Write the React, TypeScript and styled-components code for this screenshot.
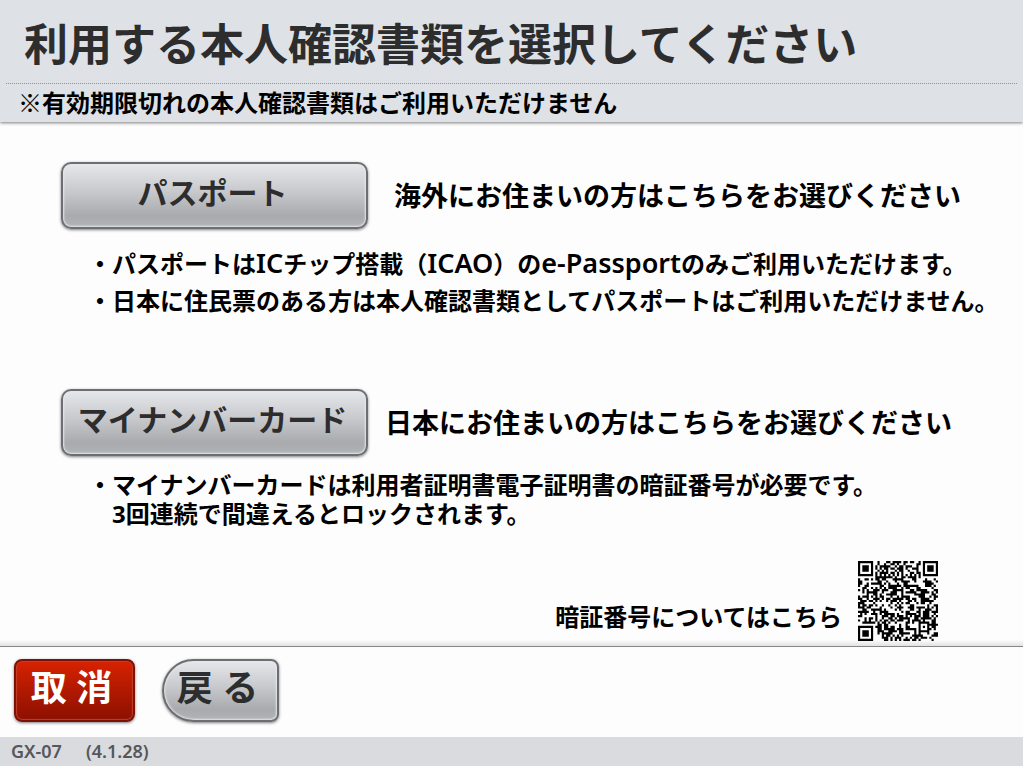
import React from "react";
import styled, { createGlobalStyle } from "styled-components";

const GlobalStyle = createGlobalStyle`
  *, *::before, *::after { box-sizing: border-box; }
  body {
    margin: 0;
    background: #fdfdfd;
    color: #000;
    font-family: "Noto Sans", "Noto Sans CJK JP", sans-serif;
    font-weight: 700;
  }
  h1, p, ul { margin: 0; padding: 0; }
`;

const Page = styled.div`
  display: flex;
  flex-direction: column;
  min-height: 100vh;
`;

const Header = styled.header`
  z-index: 1;
  background: #dee1e6;
  box-shadow: 0 1px 3px rgba(0, 0, 0, 0.5);
  padding: 4px 6px 2px;
`;

const Title = styled.h1`
  height: 80px;
  padding-left: 18px;
  border-bottom: 1px dotted #8f9296;
  color: #2d2d2d;
  font-size: 44px;
  line-height: 80px;
`;

const Notice = styled.p`
  padding-left: 12px;
  font-family: "Noto Sans CJK JP", sans-serif;
  font-size: 24px;
  line-height: 36px;
`;

const Main = styled.main`
  flex: 1;
  display: flex;
  flex-direction: column;
  padding: 40px 20px 5px 61px;
  border-bottom: 1px solid #85878a;
  background: linear-gradient(to top, #e2e2e2, #fdfdfd 6px);
`;

const Option = styled.section`
  margin-bottom: 74px;

  &:last-of-type { margin-bottom: 32px; }
`;

const OptionHead = styled.div<{ $gap: number }>`
  display: flex;
  align-items: center;
  gap: ${(p) => p.$gap}px;
`;

const OptionLabel = styled.p`
  font-size: 27px;
  line-height: 40px;
  white-space: nowrap;
`;

const BaseButton = styled.button`
  flex: none;
  padding: 0 4px 5px 0;
  border: 2px solid #6c6e73;
  border-radius: 10px;
  background: linear-gradient(#e6e7eb, #c6c8cc 45%, #a9aaad 82%, #b2b3b6);
  box-shadow: inset 0 0 2px 1px #e6e7ea, 0 1px 3px rgba(0, 0, 0, 0.5);
  color: #2d2d2d;
  font: inherit;
  cursor: pointer;
`;

const DocumentButton = styled(BaseButton)`
  width: 307px;
  height: 67px;
  font-size: 30px;
  line-height: 40px;
`;

const NavButton = styled(BaseButton)`
  height: 63px;
  padding-right: 6px;
  font-size: 36px;
  line-height: 48px;
`;

const CancelButton = styled(NavButton)`
  width: 121px;
  border-color: #7a1208;
  border-radius: 8px;
  background: linear-gradient(#d82200, #b41a00 45%, #8c1000);
  box-shadow: inset 0 0 1px 1px #c2402c, 0 1px 3px rgba(0, 0, 0, 0.5);
  color: #fff;
`;

const BackButton = styled(NavButton)`
  width: 117px;
  border-radius: 32px 8px 8px 32px;
`;

const Notes = styled.ul<{ $top: number }>`
  display: flex;
  flex-direction: column;
  gap: 8px;
  margin-top: ${(p) => p.$top}px;
  padding-left: 51px;
  font-size: 24px;
  line-height: 29px;
  list-style: none;

  li {
    text-indent: -24px;
  }
`;

const Latin = styled.span`
  font-size: 27px;
  font-weight: 600;
  line-height: 24px;
`;

const PinHelp = styled.div`
  display: flex;
  justify-content: flex-end;
  align-items: center;
  gap: 16px;
  margin-top: auto;
  padding-right: 65px;
  font-size: 24px;
  line-height: 32px;

  p { padding-top: 32px; }
  svg { display: block; }
`;

const Actions = styled.nav`
  display: flex;
  gap: 27px;
  padding: 12px 14px 15px;
`;

const Footer = styled.footer`
  display: flex;
  gap: 24px;
  padding: 0 11px;
  background: #d9dbdf;
  color: #55575b;
  font-size: 18px;
  font-weight: 600;
  line-height: 29px;
`;

const QR_SIZE = 37;

function ring(x: number, y: number, cx: number, cy: number) {
  return Math.max(Math.abs(x - cx), Math.abs(y - cy));
}

function isDark(x: number, y: number) {
  for (const [cx, cy] of [[3, 3], [33, 3], [3, 33]]) {
    const d = ring(x, y, cx, cy);
    if (d <= 4) return d <= 1 || d === 3;
  }
  const a = ring(x, y, 30, 30);
  if (a <= 2) return a !== 1;
  if (x === 6 || y === 6) return (x + y) % 2 === 0;
  let h = (x * 374761393 + y * 668265263) | 0;
  h = Math.imul(h ^ (h >>> 13), 1274126177);
  return ((h ^ (h >>> 16)) & 255) < 140;
}

function QrCode() {
  let d = "";
  for (let y = 0; y < QR_SIZE; y++) {
    for (let x = 0; x < QR_SIZE; x++) {
      if (isDark(x, y)) d += `M${x} ${y}h1v1h-1z`;
    }
  }
  return (
    <svg width="80" height="80" viewBox="0 0 37 37" role="img" aria-label="QRコード">
      <path d={d} fill="#000" />
    </svg>
  );
}

export default function App() {
  return (
    <>
      <GlobalStyle />
      <Page lang="ja">
        <Header>
          <Title>利用する本人確認書類を選択してください</Title>
          <Notice>※有効期限切れの本人確認書類はご利用いただけません</Notice>
        </Header>
        <Main>
          <Option>
            <OptionHead $gap={26}>
              <DocumentButton type="button">パスポート</DocumentButton>
              <OptionLabel>海外にお住まいの方はこちらをお選びください</OptionLabel>
            </OptionHead>
            <Notes $top={20}>
              <li>
                ・パスポートは<Latin>IC</Latin>チップ搭載（<Latin>ICAO</Latin>）の
                <Latin>e-Passport</Latin>のみご利用いただけます。
              </li>
              <li>・日本に住民票のある方は本人確認書類としてパスポートはご利用いただけません。</li>
            </Notes>
          </Option>
          <Option>
            <OptionHead $gap={17}>
              <DocumentButton type="button">マイナンバーカード</DocumentButton>
              <OptionLabel>日本にお住まいの方はこちらをお選びください</OptionLabel>
            </OptionHead>
            <Notes $top={14}>
              <li>
                ・マイナンバーカードは利用者証明書電子証明書の暗証番号が必要です。
                <br />
                3回連続で間違えるとロックされます。
              </li>
            </Notes>
          </Option>
          <PinHelp>
            <p>暗証番号についてはこちら</p>
            <QrCode />
          </PinHelp>
        </Main>
        <Actions>
          <CancelButton type="button">取 消</CancelButton>
          <BackButton type="button">戻 る</BackButton>
        </Actions>
        <Footer>
          <span>GX-07</span>
          <span>(4.1.28)</span>
        </Footer>
      </Page>
    </>
  );
}
